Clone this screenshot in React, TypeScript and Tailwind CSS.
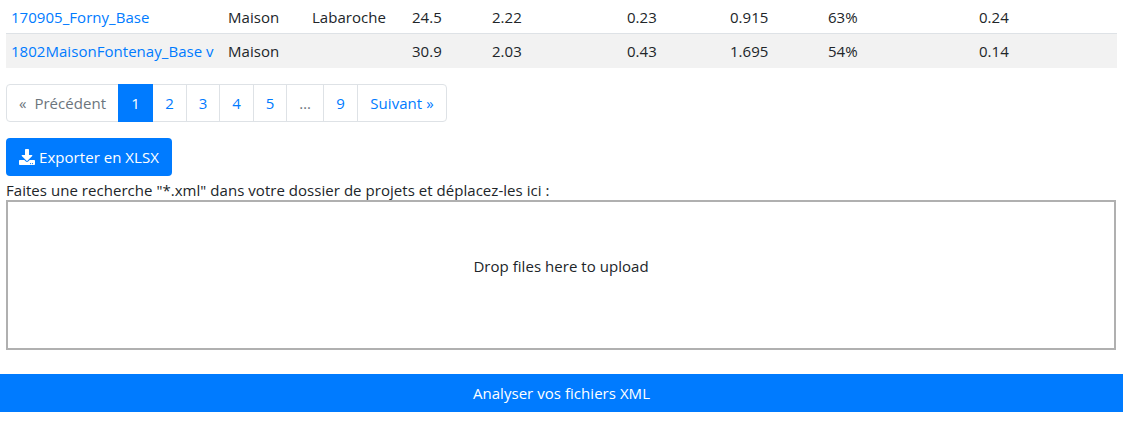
import { FaDownload } from "react-icons/fa";

const cols = "grid grid-cols-[217px_84px_100px_80px_135px_103px_98px_151px_142px] items-center";

const rows = [
  { name: "170905_Forny_Base", v: ["Maison", "Labaroche", "24.5", "2.22", "0.23", "0.915", "63%", "0.24"], cls: "h-[34px] border-b border-[#dee2e6]" },
  { name: "1802MaisonFontenay_Base v", v: ["Maison", "", "30.9", "2.03", "0.43", "1.695", "54%", "0.14"], cls: "h-[34px] bg-[#f2f2f2]" },
];

const pages = [
  { t: "2", w: "w-[34px]" },
  { t: "3", w: "w-[33px]" },
  { t: "4", w: "w-[34px]" },
  { t: "5", w: "w-[33px]" },
  { t: "…", w: "w-[37px]", muted: true },
  { t: "9", w: "w-[34px]" },
];

export default function App() {
  return (
    <div className="w-[1123px] h-[424px] bg-white overflow-hidden text-[15px] leading-[24px] text-[#212529] font-['Open_Sans','Noto_Sans',sans-serif] tracking-[0.04px]">
      <div className="px-[6px]">
        <div>
          {rows.map((r) => (
            <div key={r.name} className={`${cols} ${r.cls}`}>
              <a className="pl-[5px] text-[#007bff] whitespace-nowrap">{r.name}</a>
              {r.v.map((c, i) => (
                <div key={i} className="pl-[5px] whitespace-nowrap">{c}</div>
              ))}
            </div>
          ))}
        </div>

        <nav className="mt-4 flex w-[441px] h-[38px] rounded border border-[#dee2e6] text-center">
          <span className="w-[111px] flex items-center justify-center gap-2 text-[#6c757d]"><span>«</span><span>Précédent</span></span>
          <span className="w-[35px] -my-px bg-[#007bff] text-white flex items-center justify-center">1</span>
          {pages.map((p) => (
            <span key={p.t} className={`${p.w} border-r border-[#dee2e6] flex items-center justify-center ${p.muted ? "text-[#6c757d]" : "text-[#007bff]"}`}>{p.t}</span>
          ))}
          <span className="flex-1 text-[#007bff] flex items-center justify-center">Suivant »</span>
        </nav>

        <button className="mt-4 w-[166px] h-[38px] rounded bg-[#007bff] text-white flex items-center justify-center gap-[4px]">
          <FaDownload className="w-4 h-4" />
          <span>Exporter en XLSX</span>
        </button>

        <div className="mt-[4px] h-[20px] leading-[20px] whitespace-nowrap">Faites une recherche "*.xml" dans votre dossier de projets et déplacez-les ici :</div>

        <div className="h-[150px] w-[1110px] border-2 border-[#b0b0b0] pb-[18px] flex items-center justify-center">Drop files here to upload</div>
      </div>

      <div className="mt-6 h-[38px] bg-[#007bff] text-white flex items-center justify-center">Analyser vos fichiers XML</div>
    </div>
  );
}
